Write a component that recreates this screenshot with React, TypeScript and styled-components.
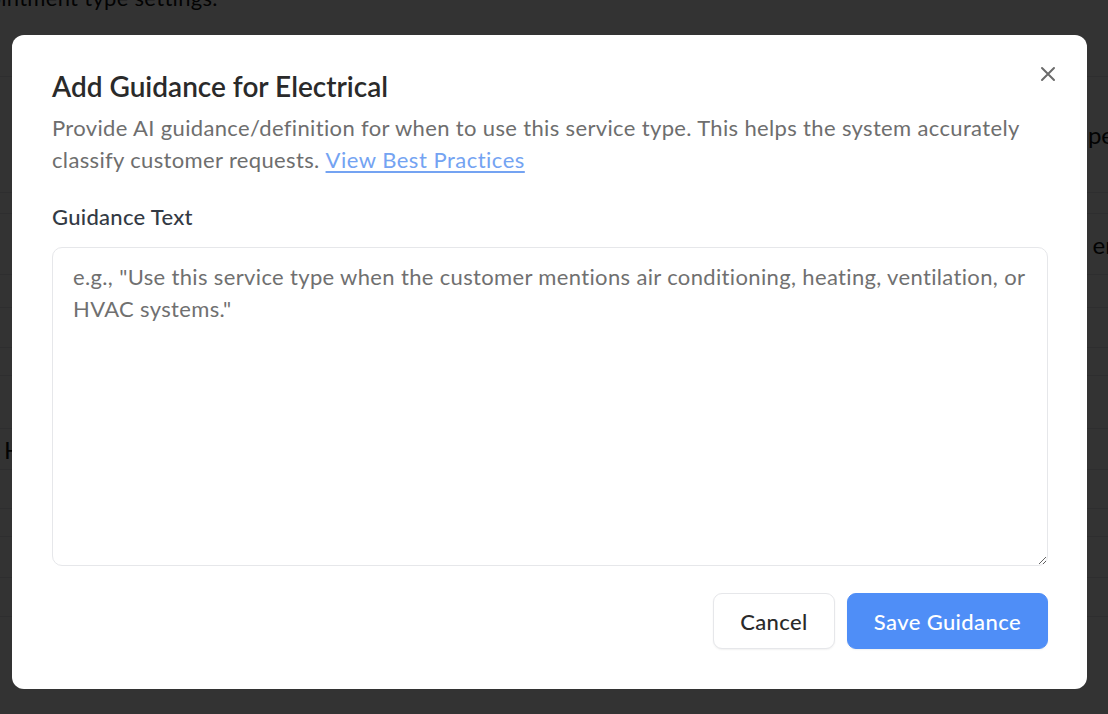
import React from 'react';
import styled, { createGlobalStyle } from 'styled-components';

const GlobalStyle = createGlobalStyle`
  html, body { margin: 0; padding: 0; }
  body {
    width: 1108px;
    height: 714px;
    overflow: hidden;
    background: #ffffff;
    font-family: "Lato", "Noto Sans", sans-serif;
  }
`;

const Page = styled.div`
  width: 1108px;
  height: 714px;
  overflow: hidden;
  background: #ffffff;
`;

const PageIntro = styled.p`
  margin: -14px 0 0 -52px;
  font-size: 22px;
  line-height: 24px;
  letter-spacing: 0.3px;
  color: #111;
  white-space: nowrap;
`;

const Table = styled.div`
  display: flex;
  flex-direction: column;
  margin-top: 40px;
`;

const Row = styled.div<{ h: number }>`
  height: ${p => p.h}px;
  border-bottom: 1px solid #e5e7eb;
  display: flex;
  align-items: center;
  justify-content: space-between;
  font-size: 24px;
  color: #111;
  padding: 0 0 0 4px;
`;

const RowEnd = styled.span`
  margin-right: -6px;
`;

const Overlay = styled.div`
  position: fixed;
  inset: 0;
  background: rgba(0, 0, 0, 0.8);
`;

const Modal = styled.div`
  position: fixed;
  left: 12px;
  top: 35px;
  width: 1075px;
  height: 654px;
  box-sizing: border-box;
  background: #ffffff;
  border-radius: 12px;
  padding: 34px 39px 40px 40px;
  display: flex;
  flex-direction: column;
`;

const CloseButton = styled.button`
  position: absolute;
  right: 29px;
  top: 29px;
  width: 20px;
  height: 20px;
  padding: 0;
  border: none;
  background: none;
  display: flex;
  align-items: center;
  justify-content: center;
  color: #6b6b6b;
`;

const Title = styled.h2`
  margin: 0;
  font-size: 28px;
  line-height: 34px;
  font-weight: 600;
  color: #2a2a2a;
`;

const Description = styled.p`
  margin: 9px 0 0;
  font-size: 22px;
  line-height: 32px;
  letter-spacing: 0.35px;
  color: #6e6e6e;
`;

const Link = styled.a`
  color: #74a3f2;
  text-decoration: underline;
  text-underline-offset: 3px;
  letter-spacing: 0.5px;
`;

const Label = styled.label`
  margin-top: 27px;
  font-size: 22px;
  line-height: 28px;
  letter-spacing: 0.3px;
  font-weight: 500;
  color: #333a44;
`;

const TextArea = styled.textarea`
  margin-top: 16px;
  height: 319px;
  box-sizing: border-box;
  border: 1.5px solid #e6e7ea;
  border-radius: 10px;
  padding: 13px 20px;
  font-family: inherit;
  font-size: 22px;
  line-height: 32px;
  letter-spacing: 0.35px;
  color: #333;
  resize: vertical;
  outline: none;
  &::placeholder {
    color: #707070;
  }
`;

const Footer = styled.div`
  margin-top: auto;
  display: flex;
  justify-content: flex-end;
  gap: 12px;
`;

const Button = styled.button<{ primary?: boolean }>`
  height: 56px;
  padding: 0 26px;
  border-radius: 9px;
  font-family: inherit;
  font-size: 22px;
  letter-spacing: 0.4px;
  font-weight: 500;
  cursor: pointer;
  border: 1.5px solid ${p => (p.primary ? '#4f8ef7' : '#e6e7ea')};
  background: ${p => (p.primary ? '#4f8ef7' : '#ffffff')};
  color: ${p => (p.primary ? '#ffffff' : '#2a2a2a')};
  box-shadow: 0 1px 2px rgba(0, 0, 0, 0.06);
`;

const rows = [
  { h: 26, left: '', right: '' },
  { h: 115, left: '', right: 'pe' },
  { h: 20, left: '', right: '' },
  { h: 60, left: '', right: 'er' },
  { h: 32, left: '', right: '' },
  { h: 39, left: '', right: '' },
  { h: 27, left: '', right: '' },
  { h: 52, left: '', right: '' },
  { h: 40, left: 'H', right: '' },
  { h: 38, left: '', right: '' },
  { h: 27, left: '', right: '' },
  { h: 40, left: '', right: '' },
  { h: 38, left: '', right: '' },
  { h: 100, left: '', right: '' },
];

export default function App() {
  return (
    <>
      <GlobalStyle />
      <Page>
        <PageIntro>Appointment type settings.</PageIntro>
        <Table>
          {rows.map((r, i) => (
            <Row key={i} h={r.h}>
              <span>{r.left}</span>
              <RowEnd>{r.right}</RowEnd>
            </Row>
          ))}
        </Table>
      </Page>
      <Overlay />
      <Modal role="dialog">
        <CloseButton aria-label="Close">
          <svg width="18" height="18" viewBox="0 0 18 18" fill="none" stroke="currentColor" strokeWidth="2" strokeLinecap="round">
            <path d="M3 3l12 12M15 3L3 15" />
          </svg>
        </CloseButton>
        <Title>Add Guidance for Electrical</Title>
        <Description>
          Provide AI guidance/definition for when to use this service type. This helps the system accurately
          classify customer requests. <Link href="#">View Best Practices</Link>
        </Description>
        <Label>Guidance Text</Label>
        <TextArea placeholder={'e.g., "Use this service type when the customer mentions air conditioning, heating, ventilation, or HVAC systems."'} />
        <Footer>
          <Button>Cancel</Button>
          <Button primary>Save Guidance</Button>
        </Footer>
      </Modal>
    </>
  );
}
